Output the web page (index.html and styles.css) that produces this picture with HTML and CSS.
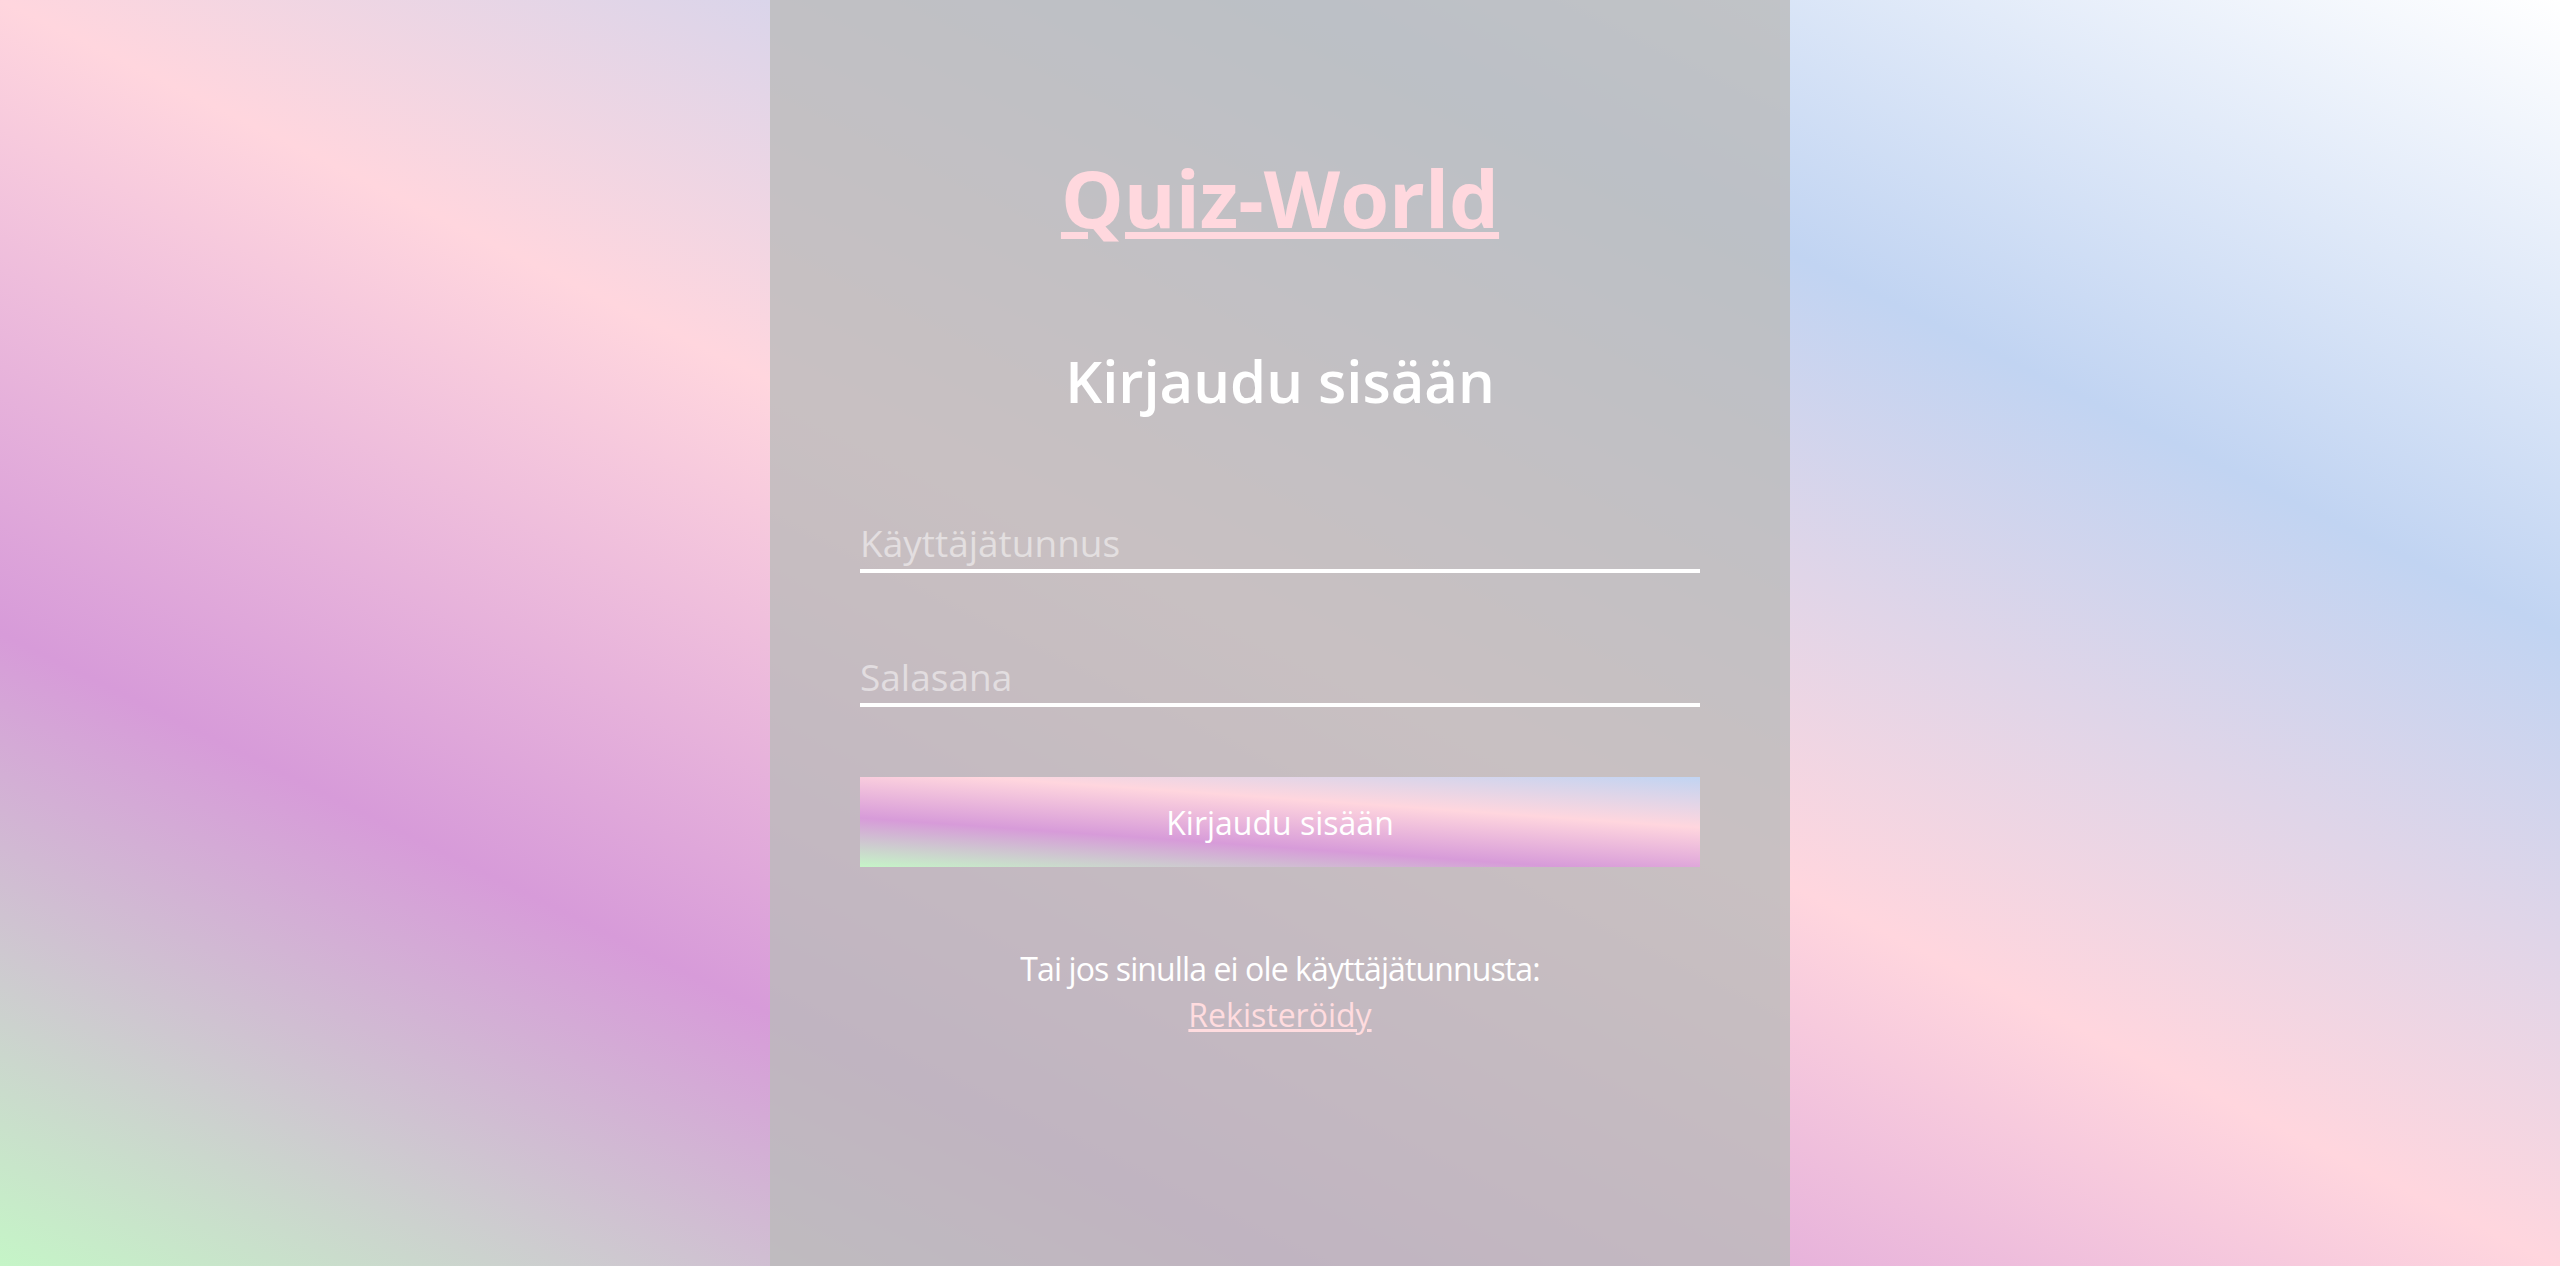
FILE: index.html
```html
<!DOCTYPE html>
<html lang="fi">
<head>
<meta charset="utf-8">
<title>Quiz-World</title>
<link rel="stylesheet" href="styles.css">
</head>
<body>
<main class="panel">
  <h1 class="brand"><a href="#">Quiz-World</a></h1>
  <h2 class="heading">Kirjaudu sisään</h2>
  <form class="login-form">
    <input class="field" type="text" placeholder="Käyttäjätunnus">
    <input class="field field-second" type="password" placeholder="Salasana">
    <button class="submit" type="button">Kirjaudu sisään</button>
  </form>
  <p class="register"><span class="register-text">Tai jos sinulla ei ole käyttäjätunnusta:</span><br><a href="#">Rekisteröidy</a></p>
</main>
</body>
</html>
```

FILE: styles.css
```css
html, body {
  margin: 0;
  padding: 0;
  height: 100%;
}

body {
  font-family: "Open Sans", "Noto Sans", sans-serif;
  background: linear-gradient(to top right, #c5f5c7 0%, #d79bd9 25%, #ffd6de 50%, #c1d4f2 75%, #ffffff 100%);
  overflow: hidden;
}

.panel {
  box-sizing: border-box;
  width: 1020px;
  height: 100%;
  margin: 0 auto;
  padding-top: 148px;
  background: rgba(186, 186, 186, 0.8);
  display: flex;
  flex-direction: column;
  align-items: center;
}

.brand {
  margin: 0;
  font-size: 79px;
  line-height: 100px;
  font-weight: 700;
}

.brand a {
  color: #ffd8de;
  text-decoration: underline;
}

.heading {
  margin: 98px 0 0;
  font-size: 58px;
  line-height: 70px;
  font-weight: 600;
  color: #ffffff;
}

.login-form {
  margin-top: 99px;
  width: 840px;
  display: flex;
  flex-direction: column;
}

.field {
  display: block;
  box-sizing: content-box;
  width: 100%;
  height: 54px;
  padding: 0;
  margin: 0;
  border: 0;
  border-bottom: 4px solid #ffffff;
  background: transparent;
  font-family: inherit;
  font-size: 37px;
  font-weight: 400;
  color: #ffffff;
  outline: none;
}

.field::placeholder {
  color: rgba(255, 255, 255, 0.5);
}

.field-second {
  margin-top: 76px;
}

.submit {
  margin-top: 70px;
  height: 90px;
  border: 0;
  padding: 0;
  background: linear-gradient(4deg, #c5f5c7 0%, #d79bd9 33%, #ffd6de 66%, #c1d4f2 100%);
  color: #ffffff;
  font-family: inherit;
  font-size: 32px;
  font-weight: 400;
  cursor: pointer;
}

.register {
  margin: 79px 0 0;
  font-size: 32px;
  line-height: 46px;
  color: #ffffff;
  text-align: center;
}

.register-text {
  letter-spacing: -0.9px;
}

.register a {
  color: #ffdcdf;
  text-decoration: underline;
}
```
